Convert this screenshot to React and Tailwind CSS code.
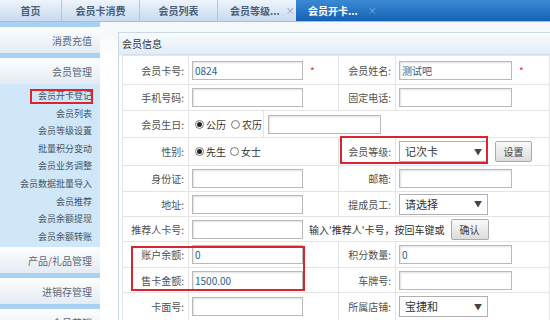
import React from 'react';

const font = { fontFamily: '"Noto Sans CJK SC", "Noto Sans", sans-serif' };

// sidebar menu under 会员管理
const memberMenu = [
  '会员开卡登记',
  '会员列表',
  '会员等级设置',
  '批量积分变动',
  '会员业务调整',
  '会员数据批量导入',
  '会员推荐',
  '会员余额提现',
  '会员余额转账',
];

const Input = ({ value = '', w = 'w-[111px]' }) => (
  <div className={`${w} h-[19px] border border-[#b9b9b9] bg-white shadow-[inset_1px_1px_2px_rgba(0,0,0,0.12)] flex items-center px-[2px] text-[10px] text-[#2c5e8e]`}>
    {value}
  </div>
);

const Select = ({ value }) => (
  <div className="w-[89px] h-[21px] border border-[#b0b0b0] bg-white flex items-center justify-between px-[5px] text-[11px] text-[#333]">
    <span>{value}</span>
    <span className="text-[8px] text-[#444]">▼</span>
  </div>
);

const Button = ({ children, w = 'w-[37px]' }) => (
  <div className={`${w} h-[21px] border border-[#aaa] rounded-[2px] bg-gradient-to-b from-[#fafafa] to-[#dcdcdc] flex items-center justify-center text-[10px] text-[#444]`}>
    {children}
  </div>
);

const Radio = ({ checked, label }) => (
  <span className="flex items-center gap-[2px]">
    <span className="w-[9px] h-[9px] rounded-full border border-[#777] bg-white flex items-center justify-center">
      {checked && <span className="w-[5px] h-[5px] rounded-full bg-[#222]" />}
    </span>
    <span className="text-[10px] text-[#333]">{label}</span>
  </span>
);

const Star = () => <span className="text-[#d33] text-[10px] ml-[7px]">*</span>;

const Label = ({ children }) => (
  <td className="border border-[#e4e4e4] text-right pr-[4px] text-[10px] text-[#505050] whitespace-nowrap">{children}</td>
);

const Cell = ({ children, colSpan }) => (
  <td colSpan={colSpan} className="border border-[#e4e4e4] pl-[3px]">
    <div className="flex items-center">{children}</div>
  </td>
);

const SideHeader = ({ children }) => (
  <div className="h-[26px] bg-gradient-to-b from-[#fdfeff] to-[#e4ebf3] flex items-center justify-end pr-[8px] text-[10px] text-[#5a6878]">
    {children}
  </div>
);

const Stripe = () => <div className="h-[5px] bg-[#a9d1f1]" />;

const tabText = 'text-[10px] font-bold text-[#4b5f7a] whitespace-nowrap';

export default function App() {
  return (
    <div className="relative w-[550px] h-[320px] overflow-hidden bg-white" style={font}>
      {/* Tab bar */}
      <div className="h-[22px] flex bg-gradient-to-b from-[#eef4fb] to-[#c8daee] border-b border-[#9ec0e2]">
        <div className={`w-[62px] flex items-center justify-center border-r border-[#b3c8df] ${tabText}`}>首页</div>
        <div className={`w-[78px] flex items-center justify-center border-r border-[#b3c8df] ${tabText}`}>会员卡消费</div>
        <div className={`w-[78px] flex items-center justify-center border-r border-[#b3c8df] ${tabText}`}>会员列表</div>
        <div className={`w-[78px] flex items-center pl-[12px] gap-[6px] ${tabText}`}>
          <span>会员等级...</span>
          <span className="text-[9px] font-normal text-[#8a9bb0]">×</span>
        </div>
        <div className="flex-1 flex items-center pl-[12px] gap-[10px] bg-gradient-to-b from-[#3b8ad4] to-[#1461b4]">
          <span className="text-[10px] font-bold text-white whitespace-nowrap">会员开卡...</span>
          <span className="text-[9px] text-[#7fb3e6]">×</span>
        </div>
      </div>

      <div className="flex">
        {/* Sidebar */}
        <div className="w-[100px] flex flex-col shrink-0">
          <Stripe />
          <SideHeader>消费充值</SideHeader>
          <Stripe />
          <SideHeader>会员管理</SideHeader>
          <div className="bg-[#cfe7f9] pt-[3px] pb-[2px] flex flex-col items-end pr-[8px]">
            {memberMenu.map((m) => (
              <div key={m} className="h-[17.6px] flex items-center text-[9px] text-[#46525f] whitespace-nowrap">{m}</div>
            ))}
          </div>
          <SideHeader>产品/礼品管理</SideHeader>
          <Stripe />
          <SideHeader>进销存管理</SideHeader>
          <Stripe />
          <SideHeader>会员营销</SideHeader>
        </div>

        {/* Main panel */}
        <div className="flex-1 pl-[18px] pt-[10px] bg-gradient-to-b from-[#f3f7fb] to-white to-[40px]">
          <div className="border border-[#c9d9ea] border-r-0 bg-white">
            <div className="h-[22px] bg-gradient-to-b from-[#f9fbfe] to-[#e1ecf7] border-b border-[#d3e1ef] flex items-center pl-[3px] text-[10px] text-[#333]">
              会员信息
            </div>
            <div className="pl-[3px]">
              <table className="border-collapse table-fixed w-[428px]">
                <colgroup>
                  <col className="w-[66px]" />
                  <col className="w-[150px]" />
                  <col className="w-[57px]" />
                  <col />
                </colgroup>
                <tbody>
                  <tr className="h-[29px]">
                    <Label>会员卡号:</Label>
                    <Cell><Input value="0824" /><Star /></Cell>
                    <Label>会员姓名:</Label>
                    <Cell><Input value="测试吧" w="w-[113px]" /><Star /></Cell>
                  </tr>
                  <tr className="h-[26px]">
                    <Label>手机号码:</Label>
                    <Cell><Input /></Cell>
                    <Label>固定电话:</Label>
                    <Cell><Input w="w-[113px]" /></Cell>
                  </tr>
                  <tr className="h-[27px]">
                    <Label>会员生日:</Label>
                    <td colSpan={3} className="border border-[#e4e4e4]">
                      <div className="flex items-stretch h-[26px]">
                        <div className="w-[75px] flex items-center gap-[5px] pl-[6px] border-r border-[#e4e4e4]">
                          <Radio checked label="公历" />
                          <Radio label="农历" />
                        </div>
                        <div className="flex items-center pl-[4px]">
                          <Input w="w-[113px]" />
                        </div>
                      </div>
                    </td>
                  </tr>
                  <tr className="h-[28px]">
                    <Label>性别:</Label>
                    <Cell>
                      <div className="flex items-center gap-[4px] pl-[3px]">
                        <Radio checked label="先生" />
                        <Radio label="女士" />
                      </div>
                    </Cell>
                    <Label>会员等级:</Label>
                    <Cell>
                      <Select value="记次卡" />
                      <div className="ml-[7px]"><Button>设置</Button></div>
                    </Cell>
                  </tr>
                  <tr className="h-[26px]">
                    <Label>身份证:</Label>
                    <Cell><Input /></Cell>
                    <Label>邮箱:</Label>
                    <Cell><Input w="w-[113px]" /></Cell>
                  </tr>
                  <tr className="h-[25px]">
                    <Label>地址:</Label>
                    <Cell><Input /></Cell>
                    <Label>提成员工:</Label>
                    <Cell><Select value="请选择" /></Cell>
                  </tr>
                  <tr className="h-[25px]">
                    <Label>推荐人卡号:</Label>
                    <Cell colSpan={3}>
                      <Input />
                      <span className="ml-[6px] text-[10px] text-[#333] whitespace-nowrap">输入'推荐人'卡号，按回车键或</span>
                      <div className="ml-[6px]"><Button w="w-[38px]">确认</Button></div>
                    </Cell>
                  </tr>
                  <tr className="h-[26px]">
                    <Label>账户余额:</Label>
                    <Cell><Input value="0" /></Cell>
                    <Label>积分数量:</Label>
                    <Cell><Input value="0" w="w-[113px]" /></Cell>
                  </tr>
                  <tr className="h-[25px]">
                    <Label>售卡金额:</Label>
                    <Cell><Input value="1500.00" /></Cell>
                    <Label>车牌号:</Label>
                    <Cell><Input w="w-[113px]" /></Cell>
                  </tr>
                  <tr className="h-[28px]">
                    <Label>卡面号:</Label>
                    <Cell><Input /></Cell>
                    <Label>所属店铺:</Label>
                    <Cell><Select value="宝捷和" /></Cell>
                  </tr>
                </tbody>
              </table>
            </div>
          </div>
        </div>
      </div>

      {/* red highlight boxes */}
      <div className="absolute left-[30px] top-[89px] w-[63px] h-[15px] border-2 border-[#d9252f]" />
      <div className="absolute left-[340px] top-[136px] w-[148px] h-[28px] border-2 border-[#d9252f]" />
      <div className="absolute left-[131px] top-[246px] w-[174px] h-[45px] border-2 border-[#d9252f]" />
    </div>
  );
}
